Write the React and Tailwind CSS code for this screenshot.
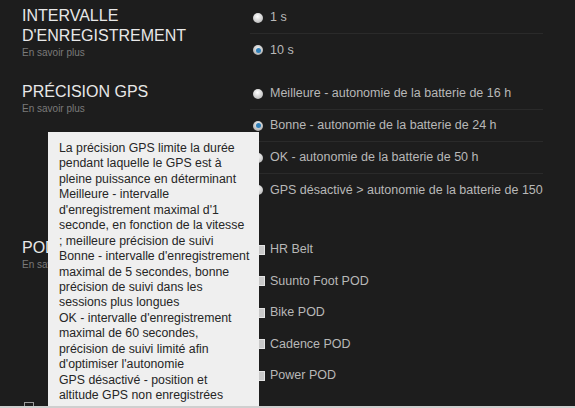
import React from 'react';

// Settings panel (dark) with a GPS precision tooltip open over it.

const Radio = ({ checked }) => (
  <span
    className={`w-[10px] h-[10px] rounded-full shrink-0 flex items-center justify-center ${
      checked
        ? 'bg-[radial-gradient(circle_at_50%_35%,#f4f4f4,#9a9a9a)]'
        : 'bg-[radial-gradient(circle_at_45%_35%,#ffffff,#a8a8a8)]'
    }`}
  >
    {checked && <span className="w-[5px] h-[5px] rounded-full bg-[#2f7fb8]" />}
  </span>
);

const Check = () => (
  <span className="w-[7px] h-[10px] shrink-0 ml-[5px] mr-[-2px] bg-[#c9c9c9] border border-[#e4e4e4]" />
);

function Heading({ lines }) {
  return (
    <div className="pt-[4px]">
      <h2 className="text-[16px] leading-[20px] text-[#e8e8e8] uppercase">
        {lines.map((l, i) => (
          <span key={i} className="block">{l}</span>
        ))}
      </h2>
      <p className="text-[10px] leading-[12px] text-[#7a7a7a] mt-[1px]">En savoir plus</p>
    </div>
  );
}

function Section({ title, children, className = '' }) {
  return (
    <div className={`flex ${className}`}>
      <div className="w-[250px] shrink-0 pl-[22px]">
        <Heading lines={title} />
      </div>
      <div className="w-[293px]">{children}</div>
    </div>
  );
}

function Row({ control, label, last, h = 'h-8' }) {
  return (
    <div
      className={`${h} flex items-center pl-[3px] gap-[7px] ${
        last ? '' : 'border-b border-[#2a2a2a]'
      }`}
    >
      {control}
      <span className="text-[12.5px] text-[#b8b8b8] whitespace-nowrap">{label}</span>
    </div>
  );
}

// line breaks follow the reference tooltip
const tooltip = [
  'La précision GPS limite la durée',
  'pendant laquelle le GPS est à',
  'pleine puissance en déterminant',
  'Meilleure - intervalle',
  "d'enregistrement maximal d'1",
  'seconde, en fonction de la vitesse',
  '; meilleure précision de suivi',
  "Bonne - intervalle d'enregistrement",
  'maximal de 5 secondes, bonne',
  'précision de suivi dans les',
  'sessions plus longues',
  "OK - intervalle d'enregistrement",
  'maximal de 60 secondes,',
  'précision de suivi limité afin',
  "d'optimiser l'autonomie",
  'GPS désactivé - position et',
  'altitude GPS non enregistrées',
];

export default function App() {
  return (
    <div className="relative w-[575px] h-[408px] overflow-hidden bg-[#1d1d1d] font-['Liberation_Sans',Arial,sans-serif]">
      <div className="pt-[2px]">
        <Section title={['Intervalle', "D'enregistrement"]}>
          <Row control={<Radio />} label="1 s" />
          <Row control={<Radio checked />} label="10 s" last />
        </Section>

        <Section title={['Précision GPS']} className="mt-[12px]">
          <Row control={<Radio />} label="Meilleure - autonomie de la batterie de 16 h" />
          <Row control={<Radio checked />} label="Bonne - autonomie de la batterie de 24 h" />
          <Row control={<Radio />} label="OK - autonomie de la batterie de 50 h" />
          <Row control={<Radio />} label="GPS désactivé > autonomie de la batterie de 150" last />
        </Section>

        <Section title={['POD']} className="mt-[28px]">
          {['HR Belt', 'Suunto Foot POD', 'Bike POD', 'Cadence POD', 'Power POD'].map((p) => (
            <Row key={p} control={<Check />} label={p} last h="h-[31.5px]" />
          ))}
        </Section>

        <div className="pl-[24px] mt-[10px]">
          <span className="block w-[10px] h-[10px] border border-[#9a9a9a]" />
        </div>
      </div>

      {/* tooltip */}
      <div className="absolute left-[48px] top-[132px] w-[211px] h-[274px] bg-[#efefef] pt-[9px] pl-[11px] text-[12.3px] leading-[15.44px] text-[#262626]">
        {tooltip.map((t, i) => (
          <p key={i} className="whitespace-nowrap">{t}</p>
        ))}
      </div>

      <div className="absolute left-0 right-0 bottom-0 h-[2px] bg-[#cfcfcf]" />
    </div>
  );
}
